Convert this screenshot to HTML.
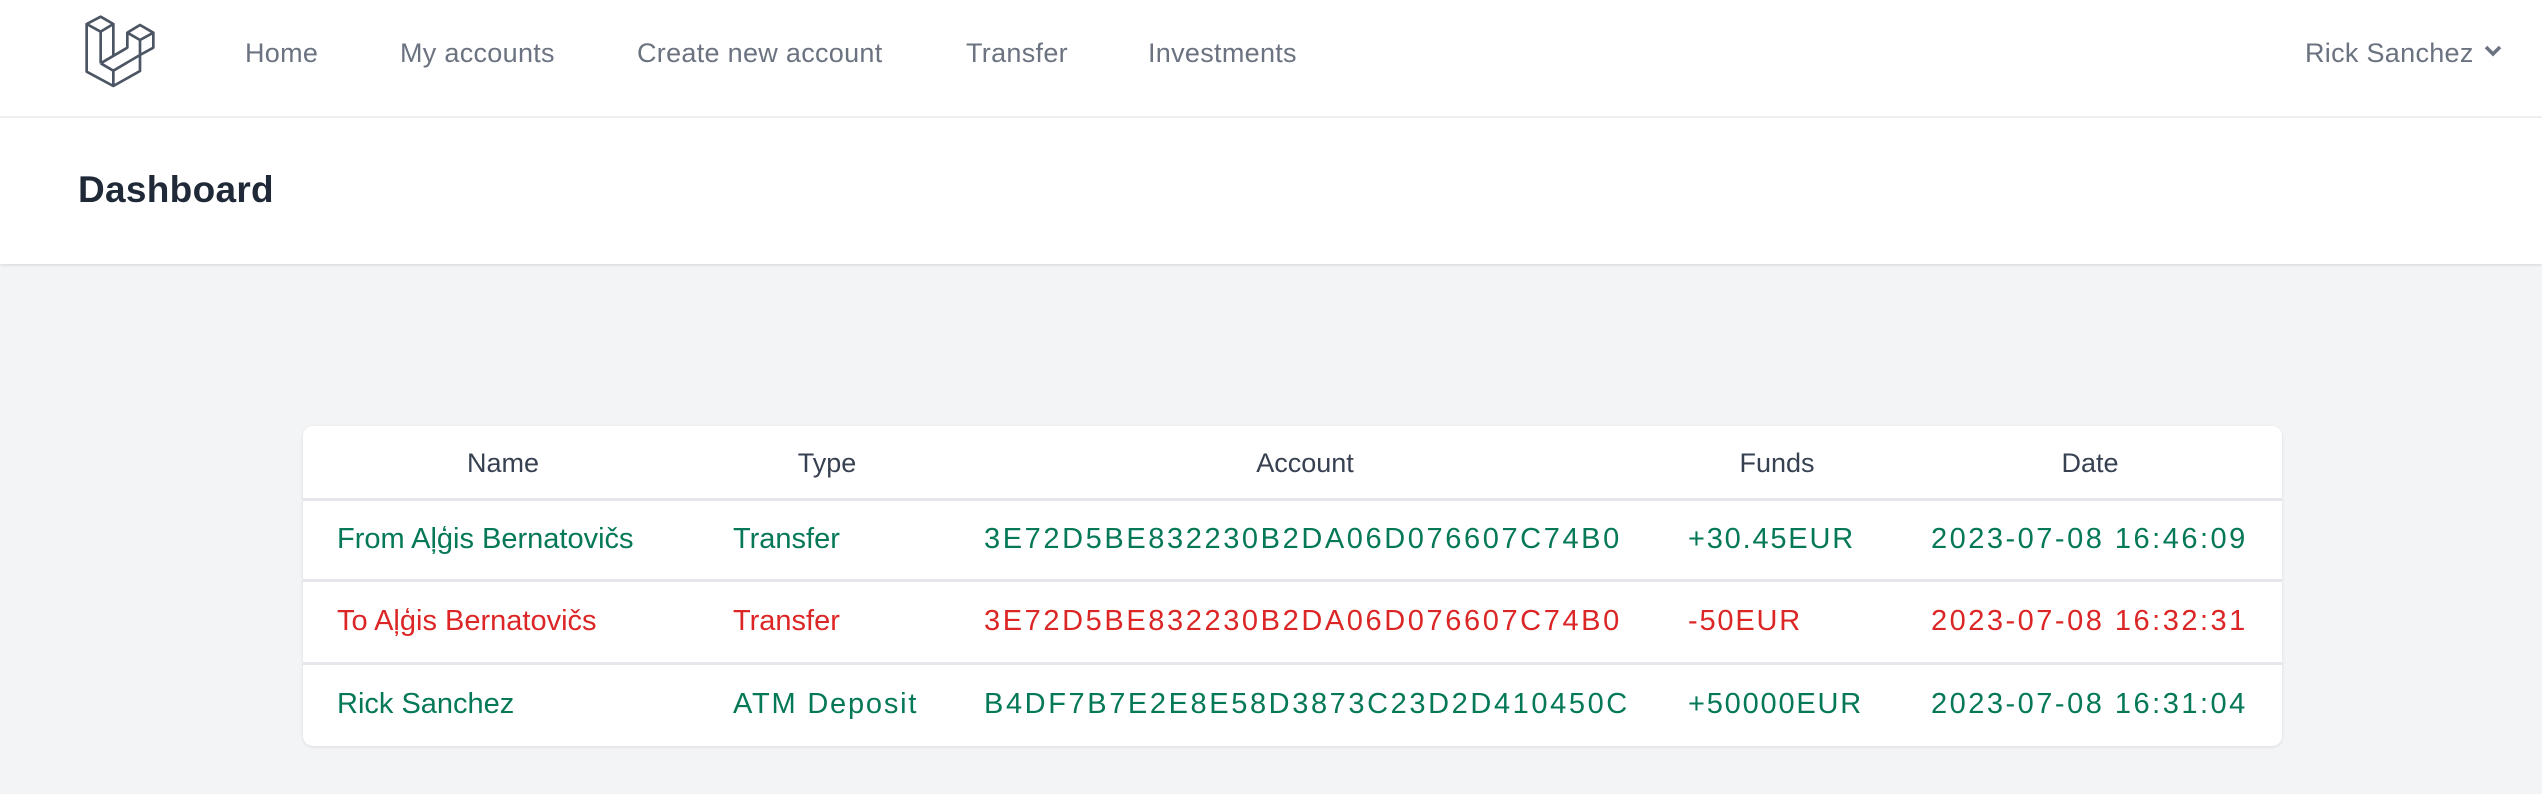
<!DOCTYPE html>
<html><head><meta charset="utf-8"><style>
body{margin:0;width:2542px;height:794px;background:#f3f4f6;font-family:"Liberation Sans",sans-serif;position:relative;overflow:hidden}
.a{position:absolute;white-space:nowrap}
.nav{position:absolute;left:0;top:0;width:2542px;height:116px;background:#fff;border-bottom:2px solid #f0f1f3}
.hdr{position:absolute;left:0;top:118px;width:2542px;height:146px;background:#fff;box-shadow:0 1px 3px rgba(0,0,0,.12)}
.ni{font-size:27px;color:#6b7280;top:38px;letter-spacing:0.3px}
.card{position:absolute;left:303px;top:426px;width:1979px;height:320px;background:#fff;border-radius:10px;box-shadow:0 1px 3px rgba(0,0,0,.1)}
.line{position:absolute;left:303px;width:1979px;height:3px;background:#e5e7eb}
.th{font-size:27px;color:#374151;transform:translateX(-50%)}
.td{font-size:29px}
.acc{letter-spacing:2.6px}.fn{letter-spacing:1.8px}.dt{letter-spacing:2.5px}
.g{color:#047857}.r{color:#dc2626}
</style></head><body>
<div class="nav"></div>
<svg class="a" style="left:70px;top:10px" width="100" height="90" viewBox="0 0 300 270" fill="none" stroke="#4b5563" stroke-width="8" stroke-linejoin="round">
<path d="M50 42L92 20L130 42L92 65Z M50 42V185L130 228L210 183V135 M92 65V160 M130 42V135 M92 160L172 113 M92 160L130 182L210 135 M130 182V228 M172 68L210 45L250 68L210 90Z M172 68V115 M250 68V113L210 135 M210 90V135"/>
</svg>
<div class="a ni" style="left:245px">Home</div>
<div class="a ni" style="left:400px">My accounts</div>
<div class="a ni" style="left:637px">Create new account</div>
<div class="a ni" style="left:966px">Transfer</div>
<div class="a ni" style="left:1148px">Investments</div>
<div class="a ni" style="left:2305px">Rick Sanchez</div>
<svg class="a" style="left:2483px;top:44px" width="20" height="14" viewBox="0 0 20 14"><path d="M3 3L10 10L17 3" fill="none" stroke="#6b7280" stroke-width="3.5"/></svg>
<div class="hdr"></div>
<div class="a" style="left:78px;top:169px;font-size:37px;font-weight:bold;color:#1f2937;letter-spacing:0.3px">Dashboard</div>
<div class="card"></div>
<div class="line" style="top:498px"></div>
<div class="line" style="top:579px"></div>
<div class="line" style="top:662px"></div>
<div class="a th" style="left:503px;top:448px">Name</div>
<div class="a th" style="left:827px;top:448px">Type</div>
<div class="a th" style="left:1305px;top:448px">Account</div>
<div class="a th" style="left:1777px;top:448px">Funds</div>
<div class="a th" style="left:2090px;top:448px">Date</div>

<div class="a td g" style="left:337px;top:523px">From Aļģis Bernatovičs</div>
<div class="a td g" style="left:733px;top:523px">Transfer</div>
<div class="a td g acc" style="left:984px;top:523px">3E72D5BE832230B2DA06D076607C74B0</div>
<div class="a td g fn" style="left:1688px;top:523px">+30.45EUR</div>
<div class="a td g dt" style="left:1931px;top:523px">2023-07-08 16:46:09</div>

<div class="a td r" style="left:337px;top:605px">To Aļģis Bernatovičs</div>
<div class="a td r" style="left:733px;top:605px">Transfer</div>
<div class="a td r acc" style="left:984px;top:605px">3E72D5BE832230B2DA06D076607C74B0</div>
<div class="a td r fn" style="left:1688px;top:605px">-50EUR</div>
<div class="a td r dt" style="left:1931px;top:605px">2023-07-08 16:32:31</div>

<div class="a td g" style="left:337px;top:688px">Rick Sanchez</div>
<div class="a td g fn" style="left:733px;top:688px">ATM Deposit</div>
<div class="a td g acc" style="left:984px;top:688px">B4DF7B7E2E8E58D3873C23D2D410450C</div>
<div class="a td g fn" style="left:1688px;top:688px">+50000EUR</div>
<div class="a td g dt" style="left:1931px;top:688px">2023-07-08 16:31:04</div>
</body></html>
